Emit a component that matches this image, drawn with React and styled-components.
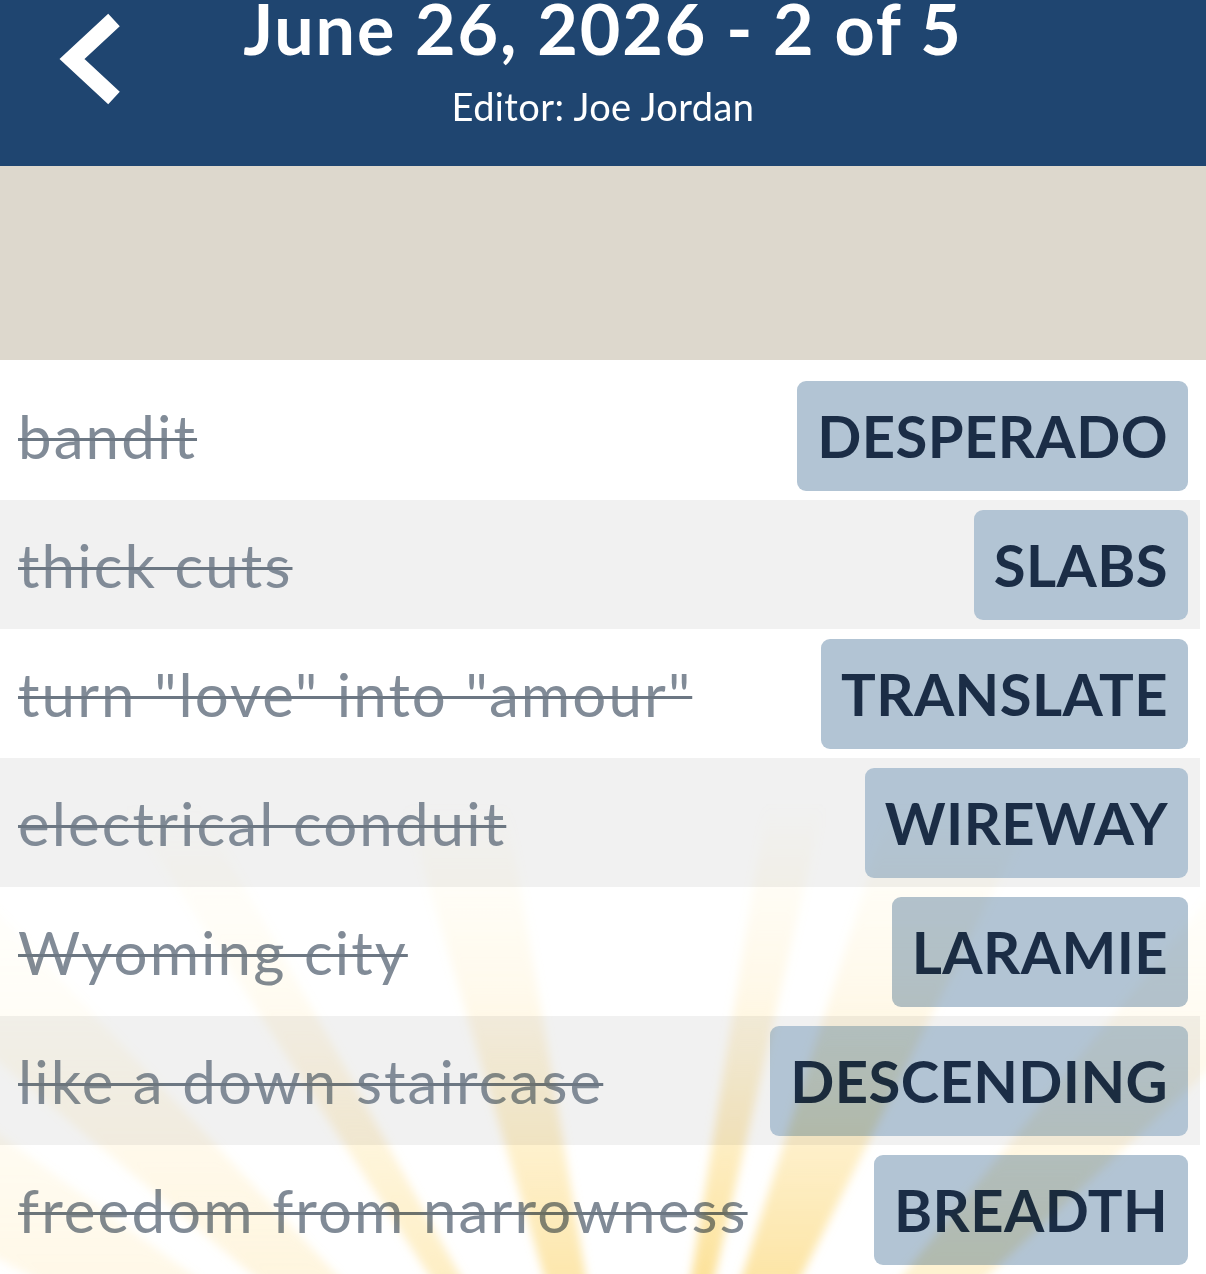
import React from "react";
import styled, { createGlobalStyle } from "styled-components";

const GlobalStyle = createGlobalStyle`
  body {
    margin: 0;
    background: #ffffff;
    font-family: "Lato", "Noto Sans", sans-serif;
  }
`;

const Page = styled.div`
  position: relative;
  width: 1206px;
  height: 1274px;
  overflow: hidden;
  background: #ffffff;
`;

const Header = styled.header`
  height: 166px;
  background: #1f4570;
  color: #ffffff;
  display: flex;
  flex-direction: column;
  align-items: center;
  position: relative;
`;

const BackButton = styled.button`
  position: absolute;
  left: 58px;
  top: 12px;
  width: 70px;
  height: 96px;
  padding: 0;
  border: none;
  background: none;
  cursor: pointer;
`;

const Title = styled.h1`
  margin: -12px 0 0;
  font-size: 70px;
  font-weight: 700;
  line-height: 80px;
  letter-spacing: 1.9px;
`;

const Subtitle = styled.div`
  margin-top: 16px;
  font-size: 38px;
  font-weight: 400;
  line-height: 44px;
  letter-spacing: 0.4px;
`;

const Banner = styled.div`
  height: 194px;
  background: #ddd8cd;
`;

const List = styled.ul`
  list-style: none;
  margin: 0;
  padding: 11px 0 0;
`;

const Row = styled.li`
  width: 1200px;
  height: 129px;
  box-sizing: border-box;
  display: flex;
  align-items: center;
  justify-content: space-between;
  padding: 0 12px 0 18px;
  background: ${(p) => (p.$alt ? "#f1f1f1" : "#ffffff")};
`;

const Clue = styled.span`
  font-size: 60px;
  font-weight: 400;
  letter-spacing: 2.1px;
  color: #818b97;
  text-decoration: line-through;
  text-decoration-thickness: 3px;
  text-decoration-color: #6c7783;
  white-space: nowrap;
`;

const Answer = styled.div`
  height: 110px;
  box-sizing: border-box;
  padding: 0 20px;
  display: flex;
  align-items: center;
  border-radius: 9px;
  background: #b2c4d4;
  color: #1b2d46;
  font-size: 58px;
  font-weight: 700;
  letter-spacing: 0.4px;
`;

const Rays = styled.svg`
  position: absolute;
  left: -40px;
  bottom: -50px;
  pointer-events: none;
  mix-blend-mode: multiply;
`;

const entries = [
  ["bandit", "DESPERADO"],
  ["thick cuts", "SLABS"],
  ['turn "love" into "amour"', "TRANSLATE"],
  ["electrical conduit", "WIREWAY"],
  ["Wyoming city", "LARAMIE"],
  ["like a down staircase", "DESCENDING"],
  ["freedom from narrowness", "BREADTH"],
];

// angle (deg from vertical), half width (deg), strength
const rays = [
  [-58, 4, 0.2],
  [-46.5, 3.5, 0.28],
  [-31, 2, 0.5],
  [-13, 3.5, 0.7],
  [11, 2, 0.85],
  [22, 4.5, 0.75],
  [43, 4, 0.4],
];

// svg extends 40px left and 50px below the page so the blur has no hard edge
const SunRays = () => {
  const w = 1286;
  const h = 520;
  const cx = 680;
  const cy = h - 50 + 326;
  const len = 1600;
  const pt = (deg) => {
    const r = (deg * Math.PI) / 180;
    return `${cx + Math.sin(r) * len},${cy - Math.cos(r) * len}`;
  };
  return (
    <Rays width={w} height={h} viewBox={`0 0 ${w} ${h}`}>
      <defs>
        <linearGradient id="rayFade" x1="0" y1="0" x2="0" y2={h - 50} gradientUnits="userSpaceOnUse">
          <stop offset="0" stopColor="#fde6a4" stopOpacity="0" />
          <stop offset="0.4" stopColor="#fde6a4" stopOpacity="0.3" />
          <stop offset="1" stopColor="#fcdd8a" stopOpacity="1" />
        </linearGradient>
        <filter id="raySoft" x="-10%" y="-10%" width="120%" height="120%">
          <feGaussianBlur stdDeviation="5" />
        </filter>
      </defs>
      <g filter="url(#raySoft)">
        {rays.map(([a, hw, o], i) => (
          <polygon
            key={i}
            points={`${cx},${cy} ${pt(a - hw)} ${pt(a + hw)}`}
            fill="url(#rayFade)"
            opacity={o}
          />
        ))}
      </g>
    </Rays>
  );
};

const App = () => {
  return (
    <>
      <GlobalStyle />
      <Page>
        <Header>
          <BackButton aria-label="Back">
            <svg width="70" height="96" viewBox="0 0 70 96">
              <polyline
                points="56,8 14,47 56,86"
                fill="none"
                stroke="#ffffff"
                strokeWidth="17"
                strokeLinejoin="miter"
                strokeMiterlimit="4"
              />
            </svg>
          </BackButton>
          <Title>June 26, 2026 - 2 of 5</Title>
          <Subtitle>Editor: Joe Jordan</Subtitle>
        </Header>
        <Banner />
        <List>
          {entries.map(([clue, answer], i) => (
            <Row key={answer} $alt={i % 2 === 1}>
              <Clue>{clue}</Clue>
              <Answer>{answer}</Answer>
            </Row>
          ))}
        </List>
        <SunRays />
      </Page>
    </>
  );
};

export default App;
